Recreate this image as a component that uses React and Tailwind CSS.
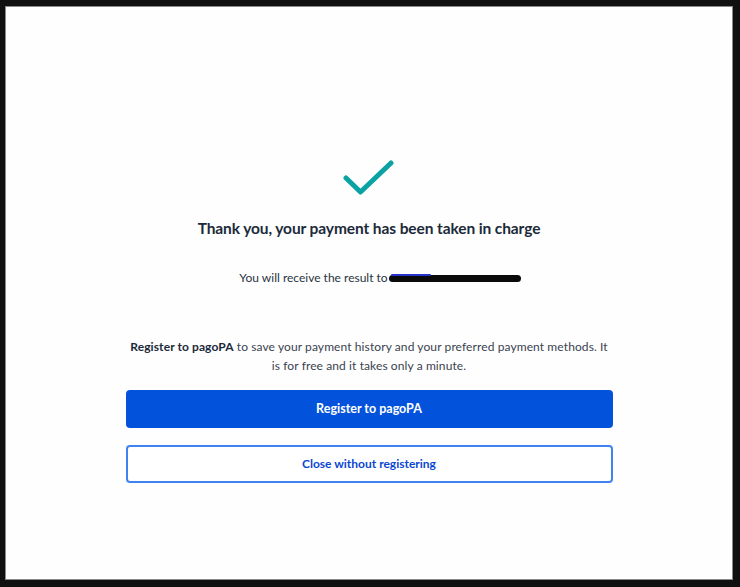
import React from "react";

export default function App() {
  return (
    <div
      className="w-[740px] h-[587px] bg-[#101010] pt-[6px] pl-[5px] pr-[7px] pb-[7px] flex"
      style={{ fontFamily: "Lato, 'Noto Sans', sans-serif" }}
    >
      <div className="flex-1 bg-[#fefefe] border border-[#8a8a8a] flex flex-col items-center">
        <svg className="mt-[153px]" width="52" height="36" viewBox="0 0 52 36" fill="none">
          <path
            d="M3 18 L17.5 32 L48 3"
            stroke="#0aa2a3"
            strokeWidth="5"
            strokeLinecap="round"
            strokeLinejoin="round"
          />
        </svg>

        <h1 className="mt-[21px] text-[15.5px] leading-[23px] font-bold text-[#1b2a3a] tracking-[-0.1px]">
          Thank you, your payment has been taken in charge
        </h1>

        <p className="mt-[29px] ml-[22px] text-[12px] leading-[18px] text-[#2a3340] flex items-center">
          <span>You will receive the result to</span>
          <span className="relative inline-block w-[133px] h-[10px]">
            <span className="absolute left-[1px] right-[0px] top-[2px] h-[7px] rounded-full bg-[#0a0a0a]" />
            <span className="absolute left-[3px] w-[40px] top-[1px] h-[2px] rounded-full bg-[#2633c9]" />
          </span>
        </p>

        <p className="mt-[50px] w-[478px] text-center text-[12px] leading-[19px] tracking-[0.1px] text-[#3a4250]">
          <span className="font-bold text-[#1b2a3a]">Register to pagoPA</span> to save your
          payment history and your preferred payment methods. It is for free and it takes only a
          minute.
        </p>

        <button className="mt-[15px] w-[487px] h-[38px] rounded-[4px] bg-[#0352dc] text-white text-[12.5px] font-bold">
          Register to pagoPA
        </button>

        <button className="mt-[17px] w-[487px] h-[38px] rounded-[4px] border-2 border-[#3f83f0] bg-white text-[#0b47d0] text-[12px] font-bold">
          Close without registering
        </button>
      </div>
    </div>
  );
}
